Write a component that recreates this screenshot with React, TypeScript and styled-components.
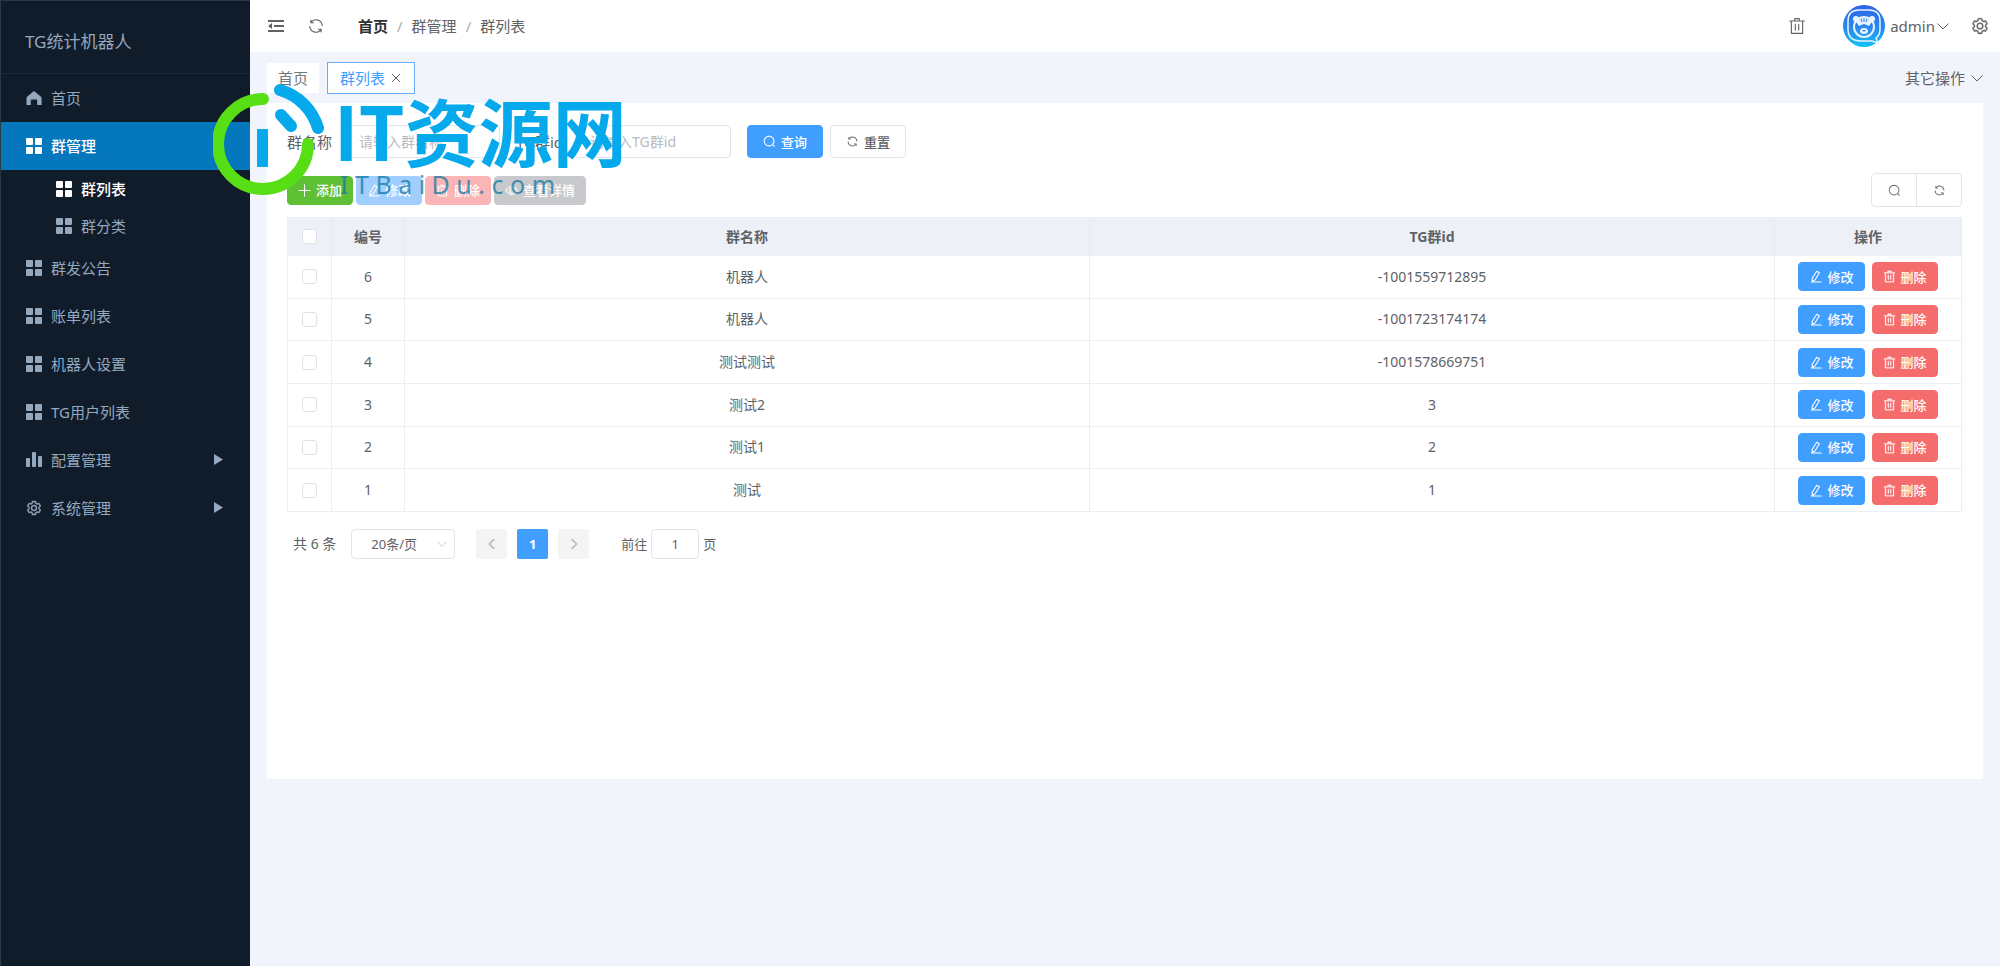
import React from 'react';
import styled, { createGlobalStyle } from 'styled-components';

const GlobalStyle = createGlobalStyle`
  * { box-sizing: border-box; }
  body {
    margin: 0;
    background: #f1f4fb;
    color: #606266;
    font-family: "Noto Sans", "Noto Sans CJK SC", sans-serif;
    font-size: 14px;
    line-height: 20px;
  }
  button, input, select { font: inherit; color: inherit; }
  button { cursor: pointer; }
  a { color: inherit; text-decoration: none; }
`;

/* ---------- icons ---------- */

const paths = {
  search:
    'm795.904 750.72 124.992 124.928a32 32 0 0 1-45.248 45.248L750.656 795.904a416 416 0 1 1 45.248-45.248zM480 832a352 352 0 1 0 0-704 352 352 0 0 0 0 704',
  refresh:
    'M771.776 794.88A384 384 0 0 1 128 512h64a320 320 0 0 0 555.712 216.448H654.72a32 32 0 1 1 0-64h149.056a32 32 0 0 1 32 32v148.928a32 32 0 1 1-64 0v-50.56zM276.288 295.616h92.992a32 32 0 0 1 0 64H220.16a32 32 0 0 1-32-32V178.56a32 32 0 0 1 64 0v50.56A384 384 0 0 1 896.128 512h-64a320 320 0 0 0-555.776-216.384z',
  trash:
    'M160 256H96a32 32 0 0 1 0-64h256V95.936a32 32 0 0 1 32-32h256a32 32 0 0 1 32 32V192h256a32 32 0 1 1 0 64h-64v672a32 32 0 0 1-32 32H192a32 32 0 0 1-32-32zm448-64v-64H416v64zM224 896h576V256H224zm192-128a32 32 0 0 1-32-32V416a32 32 0 0 1 64 0v320a32 32 0 0 1-32 32m192 0a32 32 0 0 1-32-32V416a32 32 0 0 1 64 0v320a32 32 0 0 1-32 32',
  gear:
    'M600.704 64a32 32 0 0 1 30.464 22.208l35.2 109.376c14.784 7.232 28.928 15.36 42.432 24.512l112.384-24.192a32 32 0 0 1 34.432 15.36L944.32 364.8a32 32 0 0 1-4.032 37.504l-77.12 85.12a357.12 357.12 0 0 1 0 49.024l77.12 85.248a32 32 0 0 1 4.032 37.504l-88.704 153.6a32 32 0 0 1-34.432 15.296L708.8 803.904c-13.44 9.088-27.648 17.28-42.368 24.512l-35.264 109.376A32 32 0 0 1 600.704 960H423.296a32 32 0 0 1-30.464-22.208L357.696 828.48a351.616 351.616 0 0 1-42.56-24.64l-112.32 24.256a32 32 0 0 1-34.432-15.36L79.68 659.2a32 32 0 0 1 4.032-37.504l77.12-85.248a357.12 357.12 0 0 1 0-48.896l-77.12-85.248A32 32 0 0 1 79.68 364.8l88.704-153.6a32 32 0 0 1 34.432-15.296l112.32 24.256c13.568-9.152 27.776-17.408 42.56-24.64l35.2-109.312A32 32 0 0 1 423.232 64H600.64zm-23.424 64H446.72l-36.352 113.088-24.512 11.968a294.113 294.113 0 0 0-34.816 20.096l-22.656 15.36-116.224-25.088-65.28 113.152 79.68 88.192-1.92 27.136a293.12 293.12 0 0 0 0 40.192l1.92 27.136-79.808 88.192 65.344 113.152 116.224-25.024 22.656 15.296a294.113 294.113 0 0 0 34.816 20.096l24.512 11.968L446.72 896h130.688l36.48-113.152 24.448-11.904a288.282 288.282 0 0 0 34.752-20.096l22.592-15.296 116.288 25.024 65.28-113.152-79.744-88.192 1.92-27.136a293.12 293.12 0 0 0 0-40.256l-1.92-27.136 79.808-88.128-65.344-113.152-116.288 24.96-22.592-15.232a287.616 287.616 0 0 0-34.752-20.096l-24.448-11.904L577.344 128zM512 320a192 192 0 1 1 0 384 192 192 0 0 1 0-384m0 64a128 128 0 1 0 0 256 128 128 0 0 0 0-256',
};

const Svg = styled.svg<{ $size: number }>`
  width: ${(p) => p.$size}px;
  height: ${(p) => p.$size}px;
  flex: none;
  display: block;
`;

type SolidProps = { name: keyof typeof paths; size?: number; outline?: number };
const SolidIcon = ({ name, size = 13, outline = 0 }: SolidProps) => (
  <Svg
    $size={size}
    viewBox="0 0 1024 1024"
    fill="currentColor"
    stroke="currentColor"
    strokeWidth={outline}
    aria-hidden="true"
  >
    <path d={paths[name]} />
  </Svg>
);

type LineProps = { size?: number; weight?: number; children: React.ReactNode };
const LineIcon = ({ size = 13, weight = 1, children }: LineProps) => (
  <Svg
    $size={size}
    viewBox="0 0 16 16"
    fill="none"
    stroke="currentColor"
    strokeWidth={weight}
    strokeLinecap="round"
    strokeLinejoin="round"
    aria-hidden="true"
  >
    {children}
  </Svg>
);

const ChevronDown = ({ size = 12 }: { size?: number }) => (
  <LineIcon size={size} weight={1.3}><path d="m1 5 7 7 7-7" /></LineIcon>
);
const ChevronLeft = () => <LineIcon size={14} weight={2}><path d="M10 3 5 8l5 5" /></LineIcon>;
const ChevronRight = () => <LineIcon size={14} weight={2}><path d="m6 3 5 5-5 5" /></LineIcon>;
const PlusIcon = () => <LineIcon weight={1.3}><path d="M8 1v14M1 8h14" /></LineIcon>;
const PencilIcon = () => (
  <LineIcon weight={1.3}>
    <path d="M9.5 1.500 12.800 3.400 7.300 12.200l-3.500 1.600.2-3.700zM3 14.800h12" />
  </LineIcon>
);
const EyeIcon = () => (
  <LineIcon weight={1.3}>
    <path d="M1 8c1.800-3 4-4.500 7-4.500S13.200 5 15 8c-1.800 3-4 4.500-7 4.500S2.800 11 1 8z" />
    <circle cx="8" cy="8" r="2.300" />
  </LineIcon>
);
const CloseIcon = () => <LineIcon size={12} weight={1.3}><path d="m3 3 10 10M13 3 3 13" /></LineIcon>;
const FoldIcon = () => (
  <Svg $size={18} viewBox="0 0 18 18" fill="currentColor" aria-hidden="true">
    <path d="M1 3h16v2H1zM7 8h10v2H7zM1 13h16v2H1zM1 9l4-3v6z" />
  </Svg>
);
const GridIcon = () => (
  <Svg $size={16} viewBox="0 0 16 16" fill="currentColor" aria-hidden="true">
    <rect x="0" y="0" width="7" height="7" rx="1" />
    <rect x="9" y="0" width="7" height="7" rx="1" />
    <rect x="0" y="9" width="7" height="7" rx="1" />
    <rect x="9" y="9" width="7" height="7" rx="1" />
  </Svg>
);
const HomeIcon = () => (
  <Svg $size={16} viewBox="0 0 16 16" fill="currentColor" aria-hidden="true">
    <path d="M7.300 1.500a1 1 0 0 1 1.400 0L15 6.800q.6.6.6 1.400V15h-4.400v-4.200q0-1.200-1.200-1.200H6q-1.200 0-1.200 1.200V15H.5V8.200q0-.8.600-1.400z" />
  </Svg>
);
const BarsIcon = () => (
  <Svg $size={16} viewBox="0 0 16 16" fill="currentColor" aria-hidden="true">
    <rect x="0" y="6" width="4" height="9" rx="1" />
    <rect x="6" y="0" width="4" height="15" rx="1" />
    <rect x="12" y="4" width="4" height="11" rx="1" />
  </Svg>
);
const CaretIcon = () => (
  <Svg $size={12} viewBox="0 0 12 12" fill="currentColor" aria-hidden="true">
    <path d="M2 0v11l9-5.500z" />
  </Svg>
);

/* ---------- shell ---------- */

const Shell = styled.div`
  display: flex;
  min-height: 100vh;
`;

const Sidebar = styled.aside`
  width: 250px;
  flex: none;
  background: #111c2b;
  border: solid #2b3947;
  border-width: 1px 0 0 1px;
  color: #94a8be;
`;

const Brand = styled.div`
  height: 73px;
  padding: 10px 0 0 24px;
  display: flex;
  align-items: center;
  font-size: 17px;
  border-bottom: 1px solid #1c2938;
`;

const MenuLink = styled.a<{ $active?: boolean }>`
  display: flex;
  align-items: center;
  gap: 9px;
  height: 48px;
  padding: 0 26px 0 25px;
  font-size: 15px;
  color: ${(p) => (p.$active ? '#fff' : 'inherit')};
  background: ${(p) => (p.$active ? '#0577bd' : 'transparent')};
  font-weight: ${(p) => (p.$active ? 500 : 400)};
`;

const SubLink = styled(MenuLink)`
  height: 37px;
  padding: 0 26px 0 55px;
  background: transparent;
`;

const MenuText = styled.span`
  flex: 1;
`;

const Main = styled.div`
  flex: 1;
  min-width: 0;
`;

const TopBar = styled.header`
  display: flex;
  align-items: center;
  height: 52px;
  padding: 0 11px 0 17px;
  background: #fff;
`;

const IconButton = styled.button`
  display: flex;
  padding: 0;
  border: 0;
  background: none;
`;

const ToolGroup = styled.div`
  display: flex;
  align-items: center;
  gap: 22px;
`;

const Crumbs = styled.nav`
  flex: 1;
  display: flex;
  gap: 9px;
  margin-left: 33px;
`;

const Crumb = styled.a<{ $root?: boolean }>`
  font-size: 15px;
  color: ${(p) => (p.$root ? '#303133' : '#606266')};
  font-weight: ${(p) => (p.$root ? 700 : 400)};
`;

const Slash = styled.span`
  font-size: 15px;
  color: #a8abb2;
`;

const UserButton = styled.button`
  display: flex;
  align-items: center;
  gap: 5px;
  margin: 0 22px 0 37px;
  padding: 0;
  border: 0;
  background: none;
  font-size: 15px;
`;

const UserName = styled.span`
  display: flex;
  align-items: center;
  gap: 2px;
`;

const TabBar = styled.div`
  display: flex;
  align-items: center;
  gap: 8px;
  height: 51px;
  padding: 0 17px;
`;

const Tab = styled.a<{ $active?: boolean }>`
  display: flex;
  align-items: center;
  gap: 5px;
  height: ${(p) => (p.$active ? 32 : 30)}px;
  padding: 0 ${(p) => (p.$active ? 12 : 10)}px;
  background: #fff;
  border: 1px solid ${(p) => (p.$active ? '#66adff' : '#fff')};
  font-size: 15px;
  color: ${(p) => (p.$active ? '#409eff' : '#73767a')};
`;

const TabClose = styled.span`
  color: #606266;
`;

const MoreButton = styled.button`
  display: flex;
  align-items: center;
  gap: 6px;
  margin-left: auto;
  padding: 0;
  border: 0;
  background: none;
  font-size: 15px;
`;

const Card = styled.main`
  min-height: 70vh;
  margin: 0 17px;
  padding: 22px 21px 20px 20px;
  background: #fff;
`;

/* ---------- form and buttons ---------- */

const SearchForm = styled.form`
  display: flex;
  align-items: center;
  gap: 16px;
`;

const Field = styled.label`
  display: flex;
  align-items: center;
  gap: 12px;
  font-size: 15px;
`;

const TextInput = styled.input`
  width: 156px;
  height: 33px;
  padding: 0 14px;
  border: 1px solid #e1e4ea;
  border-radius: 4px;
  background: #fff;
  font-size: 14px;
  outline: none;
  &::placeholder { color: #b8bbc2; opacity: 1; }
`;

const tones = {
  primary: ['#409eff', '#fff'],
  success: ['#5fbf35', '#fff'],
  danger: ['#f56c6c', '#fff'],
  primaryOff: ['#a0cfff', '#fff'],
  dangerOff: ['#fab6b6', '#fff'],
  infoOff: ['#c8c9cc', '#fff'],
  plain: ['#fff', '#606266'],
};

const Button = styled.button<{ $tone: keyof typeof tones; $large?: boolean }>`
  display: inline-flex;
  align-items: center;
  justify-content: center;
  gap: 5px;
  height: ${(p) => (p.$large ? 33 : 29)}px;
  padding: 0 ${(p) => (p.$large ? 15 : 10)}px;
  border: 1px solid ${(p) => (p.$tone === 'plain' ? '#e1e4ea' : tones[p.$tone][0])};
  border-radius: 4px;
  background: ${(p) => tones[p.$tone][0]};
  color: ${(p) => tones[p.$tone][1]};
  font-size: 13px;
  font-weight: 500;
  white-space: nowrap;
`;

const FormButtons = styled.div`
  display: flex;
  gap: 7px;
`;

const Toolbar = styled.div`
  display: flex;
  align-items: center;
  gap: 3px;
  margin: 15px 0 10px;
`;

const ToolToggle = styled.div`
  display: flex;
  margin-left: auto;
  border: 1px solid #e1e4ea;
  border-radius: 4px;
  background: #fff;
`;

const ToggleButton = styled.button`
  display: flex;
  align-items: center;
  justify-content: center;
  width: 44px;
  height: 32px;
  padding: 0;
  border: 0;
  background: none;
  & + & { width: 45px; border-left: 1px solid #e1e4ea; }
`;

/* ---------- table ---------- */

const Table = styled.table`
  width: 100%;
  height: 295px;
  table-layout: fixed;
  border-collapse: collapse;
  text-align: center;
  border: 1px solid #ebeef5;
`;

const Col = styled.col<{ $width?: number }>`
  width: ${(p) => (p.$width ? `${p.$width}px` : 'auto')};
`;

const HeadCell = styled.th`
  height: 38px;
  padding: 0;
  background: #edf0f6;
  border-right: 1px solid #e8ebf2;
  font-weight: 700;
`;

const Cell = styled.td`
  height: 42px;
  padding: 0;
  border: 1px solid #ebeef5;
`;

const Check = styled.input`
  appearance: none;
  display: block;
  width: 15px;
  height: 15px;
  margin: 0 auto;
  border: 1px solid #dfe2e8;
  border-radius: 3px;
  background: #fff;
  &:checked { background: #409eff; border-color: #409eff; }
`;

const RowActions = styled.div`
  display: flex;
  justify-content: center;
  gap: 7px;
`;

/* ---------- pagination ---------- */

const Pager = styled.div`
  display: flex;
  align-items: center;
  margin-top: 17px;
  padding-left: 6px;
  font-size: 13px;
`;

const Total = styled.span`
  font-size: 14px;
`;

const SelectWrap = styled.label`
  position: relative;
  display: flex;
  align-items: center;
  margin: 0 21px 0 15px;
`;

const PageSize = styled.select`
  appearance: none;
  width: 104px;
  height: 30px;
  padding: 0 19px;
  border: 1px solid #e1e4ea;
  border-radius: 4px;
  background: #fff;
`;

const SelectArrow = styled.span`
  position: absolute;
  right: 8px;
  color: #b8bbc2;
  pointer-events: none;
`;

const PageList = styled.div`
  display: flex;
  gap: 10px;
`;

const PageButton = styled.button<{ $current?: boolean }>`
  display: flex;
  align-items: center;
  justify-content: center;
  width: 31px;
  height: 30px;
  padding: 0;
  border: 0;
  border-radius: 2px;
  background: ${(p) => (p.$current ? '#409eff' : '#f4f4f5')};
  color: ${(p) => (p.$current ? '#fff' : '#b8bbc2')};
  font-weight: 700;
`;

const Jump = styled.label`
  display: flex;
  align-items: center;
  gap: 4px;
  margin-left: 32px;
`;

const JumpInput = styled.input`
  width: 48px;
  height: 30px;
  padding: 0;
  border: 1px solid #e1e4ea;
  border-radius: 4px;
  text-align: center;
`;

/* ---------- floating site mark ---------- */

const Mark = styled.div`
  position: absolute;
  left: 213px;
  top: 82px;
  display: flex;
  pointer-events: none;
`;

const MarkLogo = styled.svg`
  width: 112px;
  height: 114px;
  flex: none;
`;

const MarkWords = styled.div`
  display: flex;
  flex-direction: column;
  gap: 4px;
  padding-top: 11px;
  margin-left: 9px;
`;

const MarkTitle = styled.div`
  font-family: "Noto Sans CJK SC", sans-serif;
  font-size: 74px;
  line-height: 72px;
  font-weight: 700;
  color: #05a9ec;
  white-space: nowrap;
`;

const MarkSite = styled.div`
  padding-left: 6px;
  font-size: 25px;
  line-height: 30px;
  color: #1279a4;
  opacity: 0.75;
  white-space: nowrap;
`;

/* ---------- data ---------- */

const rows = [
  { id: 6, name: '机器人', tg: '-1001559712895' },
  { id: 5, name: '机器人', tg: '-1001723174174' },
  { id: 4, name: '测试测试', tg: '-1001578669751' },
  { id: 3, name: '测试2', tg: '3' },
  { id: 2, name: '测试1', tg: '2' },
  { id: 1, name: '测试', tg: '1' },
];

const lowerMenu = [
  { text: '群发公告', icon: <GridIcon /> },
  { text: '账单列表', icon: <GridIcon /> },
  { text: '机器人设置', icon: <GridIcon /> },
  { text: 'TG用户列表', icon: <GridIcon /> },
  { text: '配置管理', icon: <BarsIcon />, nested: true },
  { text: '系统管理', icon: <SolidIcon name="gear" size={16} outline={30} />, nested: true },
];

const Avatar = () => (
  <Svg $size={42} viewBox="0 0 42 42" aria-hidden="true">
    <defs>
      <linearGradient id="avatar" x1="0" y1="0" x2="0" y2="1">
        <stop offset="0" stopColor="#2f62e8" />
        <stop offset="0.6" stopColor="#268df0" />
        <stop offset="1" stopColor="#10c4f5" />
      </linearGradient>
    </defs>
    <circle cx="21" cy="21" r="21" fill="url(#avatar)" />
    <path
      d="M16 5h10q11 0 11 11v8q0 6-4 9l2 5-6-2H18Q5 36 5 24v-8Q5 5 16 5z"
      fill="none"
      stroke="#e6f3ff"
      strokeWidth="1.500"
    />
    <circle cx="21" cy="22" r="10" fill="none" stroke="#e6f3ff" strokeWidth="2" />
    <circle cx="13" cy="14" r="3" fill="#e6f3ff" />
    <circle cx="29" cy="14" r="3" fill="#e6f3ff" />
    <path d="M13 17q8-8 16 0l-3 4-5-2-5 2z" fill="#e6f3ff" />
    <path d="M21 13v4M18 14l1 3M24 14l-1 3" stroke="#2f78ec" />
    <ellipse cx="21" cy="26" rx="4" ry="3" fill="#e6f3ff" />
    <path d="M19 25h4l-2 2z" fill="#2a86ee" />
  </Svg>
);

export default function App() {
  return (
    <>
      <GlobalStyle />
      <Shell>
        <Sidebar>
          <Brand>TG统计机器人</Brand>
          <nav>
            <MenuLink href="#home"><HomeIcon /><MenuText>首页</MenuText></MenuLink>
            <MenuLink href="#groups" $active><GridIcon /><MenuText>群管理</MenuText></MenuLink>
            <SubLink href="#list" $active><GridIcon /><MenuText>群列表</MenuText></SubLink>
            <SubLink href="#types"><GridIcon /><MenuText>群分类</MenuText></SubLink>
            {lowerMenu.map((m) => (
              <MenuLink key={m.text} href="#menu">
                {m.icon}
                <MenuText>{m.text}</MenuText>
                {m.nested && <CaretIcon />}
              </MenuLink>
            ))}
          </nav>
        </Sidebar>

        <Main>
          <TopBar>
            <ToolGroup>
              <IconButton aria-label="折叠菜单"><FoldIcon /></IconButton>
              <IconButton aria-label="刷新"><SolidIcon name="refresh" size={18} /></IconButton>
            </ToolGroup>
            <Crumbs>
              <Crumb href="#home" $root>首页</Crumb>
              <Slash>/</Slash>
              <Crumb href="#groups">群管理</Crumb>
              <Slash>/</Slash>
              <Crumb href="#list">群列表</Crumb>
            </Crumbs>
            <IconButton aria-label="清除缓存"><SolidIcon name="trash" size={18} /></IconButton>
            <UserButton>
              <Avatar />
              <UserName>admin<ChevronDown /></UserName>
            </UserButton>
            <IconButton aria-label="设置"><SolidIcon name="gear" size={18} outline={20} /></IconButton>
          </TopBar>

          <TabBar>
            <Tab href="#home">首页</Tab>
            <Tab href="#list" $active>群列表<TabClose><CloseIcon /></TabClose></Tab>
            <MoreButton>其它操作<ChevronDown /></MoreButton>
          </TabBar>

          <Card>
            <SearchForm onSubmit={(e) => e.preventDefault()}>
              <Field>群名称<TextInput placeholder="请输入群名称" /></Field>
              <Field>TG群id<TextInput placeholder="请输入TG群id" /></Field>
              <FormButtons>
                <Button $tone="primary" $large><SolidIcon name="search" outline={20} />查询</Button>
                <Button $tone="plain" $large type="reset"><SolidIcon name="refresh" />重置</Button>
              </FormButtons>
            </SearchForm>

            <Toolbar>
              <Button $tone="success"><PlusIcon />添加</Button>
              <Button $tone="primaryOff"><PencilIcon />修改</Button>
              <Button $tone="dangerOff"><SolidIcon name="trash" outline={20} />删除</Button>
              <Button $tone="infoOff"><EyeIcon />查看详情</Button>
              <ToolToggle>
                <ToggleButton aria-label="搜索"><SolidIcon name="search" /></ToggleButton>
                <ToggleButton aria-label="刷新列表"><SolidIcon name="refresh" /></ToggleButton>
              </ToolToggle>
            </Toolbar>

            <Table>
              <colgroup>
                <Col $width={44} />
                <Col $width={73} />
                <Col />
                <Col />
                <Col $width={187} />
              </colgroup>
              <thead>
                <tr>
                  <HeadCell><Check type="checkbox" aria-label="全选" /></HeadCell>
                  <HeadCell>编号</HeadCell>
                  <HeadCell>群名称</HeadCell>
                  <HeadCell>TG群id</HeadCell>
                  <HeadCell>操作</HeadCell>
                </tr>
              </thead>
              <tbody>
                {rows.map((r) => (
                  <tr key={r.id}>
                    <Cell><Check type="checkbox" aria-label={`选择 ${r.id}`} /></Cell>
                    <Cell>{r.id}</Cell>
                    <Cell>{r.name}</Cell>
                    <Cell>{r.tg}</Cell>
                    <Cell>
                      <RowActions>
                        <Button $tone="primary"><PencilIcon />修改</Button>
                        <Button $tone="danger"><SolidIcon name="trash" outline={20} />删除</Button>
                      </RowActions>
                    </Cell>
                  </tr>
                ))}
              </tbody>
            </Table>

            <Pager>
              <Total>共 6 条</Total>
              <SelectWrap>
                <PageSize aria-label="每页条数" defaultValue="20">
                  <option value="20">20条/页</option>
                  <option value="50">50条/页</option>
                </PageSize>
                <SelectArrow><ChevronDown size={10} /></SelectArrow>
              </SelectWrap>
              <PageList>
                <PageButton aria-label="上一页"><ChevronLeft /></PageButton>
                <PageButton $current>1</PageButton>
                <PageButton aria-label="下一页"><ChevronRight /></PageButton>
              </PageList>
              <Jump>前往<JumpInput defaultValue="1" />页</Jump>
            </Pager>
          </Card>
        </Main>
      </Shell>

      <Mark>
        <MarkLogo viewBox="0 0 112 114" fill="none" strokeWidth="12" strokeLinecap="round">
          <path d="M50 17a45 45 0 1 0 45 45" stroke="#57de15" />
          <path d="M67 8a56 56 0 0 1 38 38" stroke="#05a9ec" />
          <path d="m68 33 10 11" stroke="#05a9ec" />
          <path d="M44 47h11v38H44z" fill="#05a9ec" stroke="none" />
        </MarkLogo>
        <MarkWords>
          <MarkTitle>IT资源网</MarkTitle>
          <MarkSite>I T B a i D u . c o m</MarkSite>
        </MarkWords>
      </Mark>
    </>
  );
}
